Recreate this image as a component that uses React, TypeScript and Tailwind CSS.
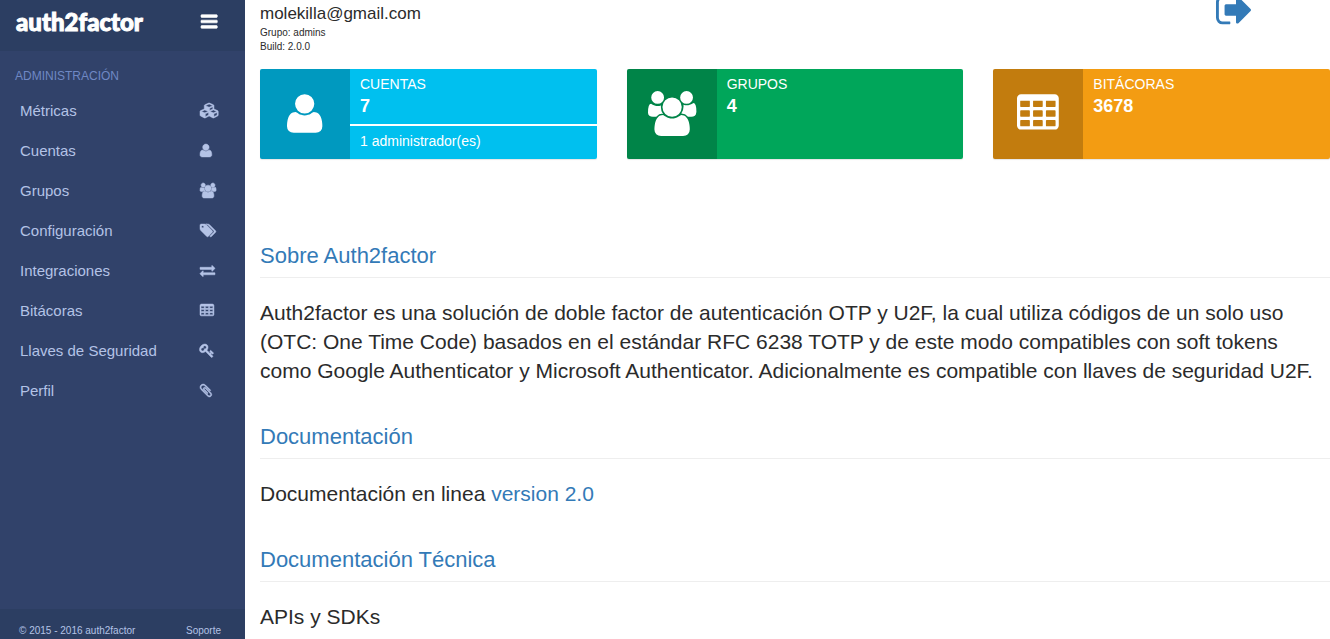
import type { ReactNode } from 'react';

type Glyph = { viewBox: string; path: string };

const bar = 'q0 26-19 45t-45 19h-1408q-26 0-45-19t-19-45v-128q0-26 19-45t45-19h1408q26 0 45 19t19 45z';
const cell = 'v-192q0-14-9-23t-23-9h-320q-14 0-23 9t-9 23v192q0 14 9 23t23 9h320q14 0 23-9t9-23z';

const glyphs = {
  bars: {
    viewBox: '128 0 1536 1792',
    path: `M1664 1344v128${bar}m0-512v128${bar}m0-512v128${bar}`,
  },
  user: {
    viewBox: '192 0 1408 1792',
    path: 'M1600 1405q0 120-73 189.5t-194 69.5h-874q-121 0-194-69.5t-73-189.5q0-53 3.5-103.5t14-109 26.5-108.5 43-97.5 62-81 85.5-53.5 111.5-20q10 0 43 21.5t73 48 107 48 135 21.5 135-21.5 107-48 73-48 43-21.5q61 0 111.5 20t85.5 53.5 62 81 43 97.5 26.5 108.5 14 109 3.5 103.5zm-320-893q0 159-112.5 271.5t-271.5 112.5-271.5-112.5-112.5-271.5 112.5-271.5 271.5-112.5 271.5 112.5 112.5 271.5z',
  },
  users: {
    viewBox: '64 0 1920 1792',
    path: 'M657 896q-162 5-265 128h-134q-82 0-138-40.5t-56-118.5q0-353 124-353 6 0 43.5 21t97.5 42.5 119 21.5q67 0 133-23-5 37-5 66 0 159 90 286zm1071 637q0 120-73 189.5t-194 69.5h-874q-121 0-194-69.5t-73-189.5q0-53 3.5-103.5t14-109 26.5-108.5 43-97.5 62-81 85.5-53.5 111.5-20q10 0 43 21.5t73 48 107 48 135 21.5 135-21.5 107-48 73-48 43-21.5q61 0 111.5 20t85.5 53.5 62 81 43 97.5 26.5 108.5 14 109 3.5 103.5zm-1024-1277q0 106-75 181t-181 75-181-75-75-181 75-181 181-75 181 75 75 181zm704 384q0 159-112.5 271.5t-271.5 112.5-271.5-112.5-112.5-271.5 112.5-271.5 271.5-112.5 271.5 112.5 112.5 271.5zm576 225q0 78-56 118.5t-138 40.5h-134q-103-123-265-128 90-127 90-286 0-29-5-66 66 23 133 23 59 0 119-21.5t97.5-42.5 43.5-21q124 0 124 353zm-128-609q0 106-75 181t-181 75-181-75-75-181 75-181 181-75 181 75 75 181z',
  },
  table: {
    viewBox: '64 0 1664 1792',
    path: `M576 1376${cell}m0-384${cell}m512 384${cell}m-512-768${cell}m512 384${cell}m512 384${cell}m-512-768${cell}m512 384${cell}m0-384${cell}m128-320v1088q0 66-47 113t-113 47h-1344q-66 0-113-47t-47-113v-1088q0-66 47-113t113-47h1344q66 0 113 47t47 113z`,
  },
  exchange: {
    viewBox: '0 0 1792 1792',
    path: 'M1792 1184v192q0 13-9.5 22.5t-22.5 9.5h-1376v192q0 13-9.5 22.5t-22.5 9.5q-12 0-24-10l-319-320q-9-9-9-22 0-14 9-23l320-320q9-9 23-9 13 0 22.5 9.5t9.5 22.5v192h1376q13 0 22.5 9.5t9.5 22.5zm0-544q0 14-9 23l-320 320q-9 9-23 9-13 0-22.5-9.5t-9.5-22.5v-192h-1376q-13 0-22.5-9.5t-9.5-22.5v-192q0-13 9.5-22.5t22.5-9.5h1376v-192q0-14 9-23t23-9q12 0 24 10l319 319q9 9 9 23z',
  },
  key: {
    viewBox: '64 0 1664 1792',
    path: 'M832 512q0-80-56-136t-136-56-136 56-56 136q0 42 19 83-41-19-83-19-80 0-136 56t-56 136 56 136 136 56 136-56 56-136q0-42-19-83 41 19 83 19 80 0 136-56t56-136zm851 704q0 17-49 66t-66 49q-9 0-28.5-16t-36.5-33-38.5-40-24.5-26l-96 96 220 220q28 28 28 68 0 42-39 81t-81 39q-40 0-68-28l-671-671q-176 131-365 131-163 0-265.5-102.5t-102.5-265.5q0-160 95-313t248-248 313-95q163 0 265.5 102.5t102.5 265.5q0 189-131 365l355 355 96-96q-3-3-26-24.5t-40-38.5-33-36.5-16-28.5q0-17 49-66t66-49q13 0 23 10 6 6 46 44.5t82 79.5 86.5 86 73 78 28.5 41z',
  },
  paperclip: {
    viewBox: '192 0 1408 1792',
    path: 'M1596 1385q0 117-79 196t-196 79q-135 0-235-100l-777-776q-113-115-113-271 0-159 110-270t269-111q158 0 273 113l605 606q10 10 10 22 0 16-30.5 46.5t-46.5 30.5q-13 0-23-10l-606-607q-79-77-181-77-106 0-179 75t-73 181q0 105 76 181l776 777q63 63 145 63 64 0 106-42t42-106q0-82-63-145l-581-581q-26-24-60-24-29 0-48 19t-19 48q0 32 25 59l410 410q10 10 10 22 0 16-31 47t-47 31q-12 0-22-10l-410-410q-63-61-63-149 0-82 57-139t139-57q88 0 149 63l581 581q100 98 100 235z',
  },
  tags: {
    viewBox: '128 0 1920 1792',
    path: 'M576 448q0-53-37.5-90.5t-90.5-37.5-90.5 37.5-37.5 90.5 37.5 90.5 90.5 37.5 90.5-37.5 37.5-90.5zm1067 576q0 53-37 90l-491 492q-39 37-91 37-53 0-90-37l-715-716q-38-37-64.5-101t-26.5-117v-416q0-52 38-90t90-38h416q53 0 117 26.5t102 64.5l715 714q37 39 37 91zm384 0q0 53-37 90l-491 492q-39 37-91 37-36 0-59-14t-53-45l470-470q37-37 37-90 0-52-37-91l-715-714q-38-38-102-64.5t-117-26.5h224q53 0 117 26.5t102 64.5l715 714q37 39 37 91z',
  },
  cubes: {
    viewBox: '0 0 2304 1792',
    path: 'M640 1632l384-192v-314l-384 164v342zm-64-454l404-173-404-173-404 173zm1088 454l384-192v-314l-384 164v342zm-64-454l404-173-404-173-404 173zm-448-293l384-165v-266l-384 164v267zm-64-379l441-189-441-189-441 189zm1088 518v416q0 36-19 67t-52 47l-448 224q-25 14-57 14t-57-14l-448-224q-4-2-7-4-2 2-7 4l-448 224q-25 14-57 14t-57-14l-448-224q-33-16-52-47t-19-67v-416q0-38 21.5-70t56.5-48l434-186v-400q0-38 21.5-70t56.5-48l448-192q23-10 50-10t50 10l448 192q35 16 56.5 48t21.5 70v400l434 186q36 16 57 48t21 70z',
  },
  signOut: {
    viewBox: '64 0 1568 1792',
    path: 'M704 1440q0 4 1 20t.5 26.5-3 23.5-10 19.5-20.5 6.5h-320q-119 0-203.5-84.5t-84.5-203.5v-704q0-119 84.5-203.5t203.5-84.5h320q13 0 22.5 9.5t9.5 22.5q0 4 1 20t.5 26.5-3 23.5-10 19.5-20.5 6.5h-320q-66 0-113 47t-47 113v704q0 66 47 113t113 47h312l11.5 1 11.5 3 8 5.5 7 9 2 13.5zm928-544q0 26-19 45l-544 544q-19 19-45 19t-45-19-19-45v-288h-448q-26 0-45-19t-19-45v-384q0-26 19-45t45-19h448v-288q0-26 19-45t45-19 45 19l544 544q19 19 19 45z',
  },
} satisfies Record<string, Glyph>;

function Icon({ name, className }: { name: keyof typeof glyphs; className: string }) {
  const glyph = glyphs[name];
  return (
    <svg viewBox={glyph.viewBox} className={`w-auto overflow-visible ${className}`} fill="currentColor" aria-hidden="true">
      <path d={glyph.path} />
    </svg>
  );
}

const menu: { label: string; icon: keyof typeof glyphs }[] = [
  { label: 'Métricas', icon: 'cubes' },
  { label: 'Cuentas', icon: 'user' },
  { label: 'Grupos', icon: 'users' },
  { label: 'Configuración', icon: 'tags' },
  { label: 'Integraciones', icon: 'exchange' },
  { label: 'Bitácoras', icon: 'table' },
  { label: 'Llaves de Seguridad', icon: 'key' },
  { label: 'Perfil', icon: 'paperclip' },
];

function Sidebar() {
  return (
    <aside className="flex w-[245px] shrink-0 flex-col bg-[#31426a] text-[#b4c3e6]">
      <div className="flex h-[51px] items-start justify-between bg-[#2c3e62] pl-4 pr-7 text-white">
        <a href="#inicio" className="mt-1 font-['Lato_Black',Lato,sans-serif] text-2xl leading-9 font-black [-webkit-text-stroke:1px_white]">
          auth2factor
        </a>
        <button type="button" aria-label="Menú" className="mt-3">
          <Icon name="bars" className="h-[19px] stroke-current stroke-[60]" />
        </button>
      </div>
      <h2 className="mt-[17px] mb-[7px] pl-[15px] text-xs leading-4 text-[#6f88c4]">ADMINISTRACIÓN</h2>
      <nav aria-label="Administración">
        <ul>
          {menu.map((item) => (
            <li key={item.label}>
              <a href={`#${item.icon}`} className="flex h-10 items-center justify-between pl-5 text-[15px]">
                {item.label}
                <span className="w-[45px] pb-0.5">
                  <Icon name={item.icon} className="h-[15px] stroke-current stroke-[60]" />
                </span>
              </a>
            </li>
          ))}
        </ul>
      </nav>
      <footer className="mt-auto flex justify-between bg-[#2c3e62] pt-3.5 pr-6 pl-[19px] text-[10px] leading-4">
        <span>© 2015 - 2016 auth2factor</span>
        <a href="#soporte">Soporte</a>
      </footer>
    </aside>
  );
}

type CardProps = {
  icon: keyof typeof glyphs;
  label: string;
  value: number;
  note?: string;
  tone: string;
};

function StatCard({ icon, label, value, note, tone }: CardProps) {
  return (
    <div className={`flex h-[90px] overflow-hidden rounded-xs text-sm text-white shadow-[0_1px_1px_rgba(0,0,0,0.1)] ${tone}`}>
      <div className="flex w-[90px] shrink-0 items-center justify-center bg-black/20 pb-0.5">
        <Icon name={icon} className="h-[45px]" />
      </div>
      <div className="flex-1">
        <div className="h-[55px] px-2.5 pt-[5px]">
          <div className="leading-5">{label}</div>
          <div className="text-lg leading-6 font-bold">{value}</div>
        </div>
        {note && <div className="border-t-2 border-white px-2.5 pt-[5px] leading-5">{note}</div>}
      </div>
    </div>
  );
}

function Section({ title, children }: { title: string; children: ReactNode }) {
  return (
    <section>
      <h2 className="mb-5 border-b border-[#eee] pb-[9px] text-[22px] leading-6 text-[#337ab7]">{title}</h2>
      <p className="text-[21px] leading-[29px]">{children}</p>
    </section>
  );
}

export default function App() {
  return (
    <div className="flex min-h-screen bg-white font-['Liberation_Sans',Arial,sans-serif] text-[#2b2b2b]">
      <Sidebar />
      <main className="min-w-0 flex-1 pl-[15px]">
        <header className="flex h-[69px] items-start justify-between overflow-hidden pt-0.5">
          <div>
            <div className="text-[17px] leading-6">molekilla@gmail.com</div>
            <div className="text-[10px] leading-[14px]">Grupo: admins</div>
            <div className="text-[10px] leading-[14px]">Build: 2.0.0</div>
          </div>
          <a href="#salir" aria-label="Salir" className="-mt-3 mr-[79px] text-[#337ab7]">
            <Icon name="signOut" className="h-10" />
          </a>
        </header>
        <div className="grid grid-cols-3 gap-[30px]">
          <StatCard icon="user" label="CUENTAS" value={7} note="1 administrador(es)" tone="bg-[#00c0ef]" />
          <StatCard icon="users" label="GRUPOS" value={4} tone="bg-[#00a65a]" />
          <StatCard icon="table" label="BITÁCORAS" value={3678} tone="bg-[#f39c12]" />
        </div>
        <div className="mt-[85px] flex flex-col gap-10">
          <Section title="Sobre Auth2factor">
            Auth2factor es una solución de doble factor de autenticación OTP y U2F, la cual utiliza códigos de un solo uso
            (OTC: One Time Code) basados en el estándar RFC 6238 TOTP y de este modo compatibles con soft tokens como Google
            Authenticator y Microsoft Authenticator. Adicionalmente es compatible con llaves de seguridad U2F.
          </Section>
          <Section title="Documentación">
            Documentación en linea{' '}
            <a href="#version-2" className="text-[#337ab7]">
              version 2.0
            </a>
          </Section>
          <Section title="Documentación Técnica">APIs y SDKs</Section>
        </div>
      </main>
    </div>
  );
}
